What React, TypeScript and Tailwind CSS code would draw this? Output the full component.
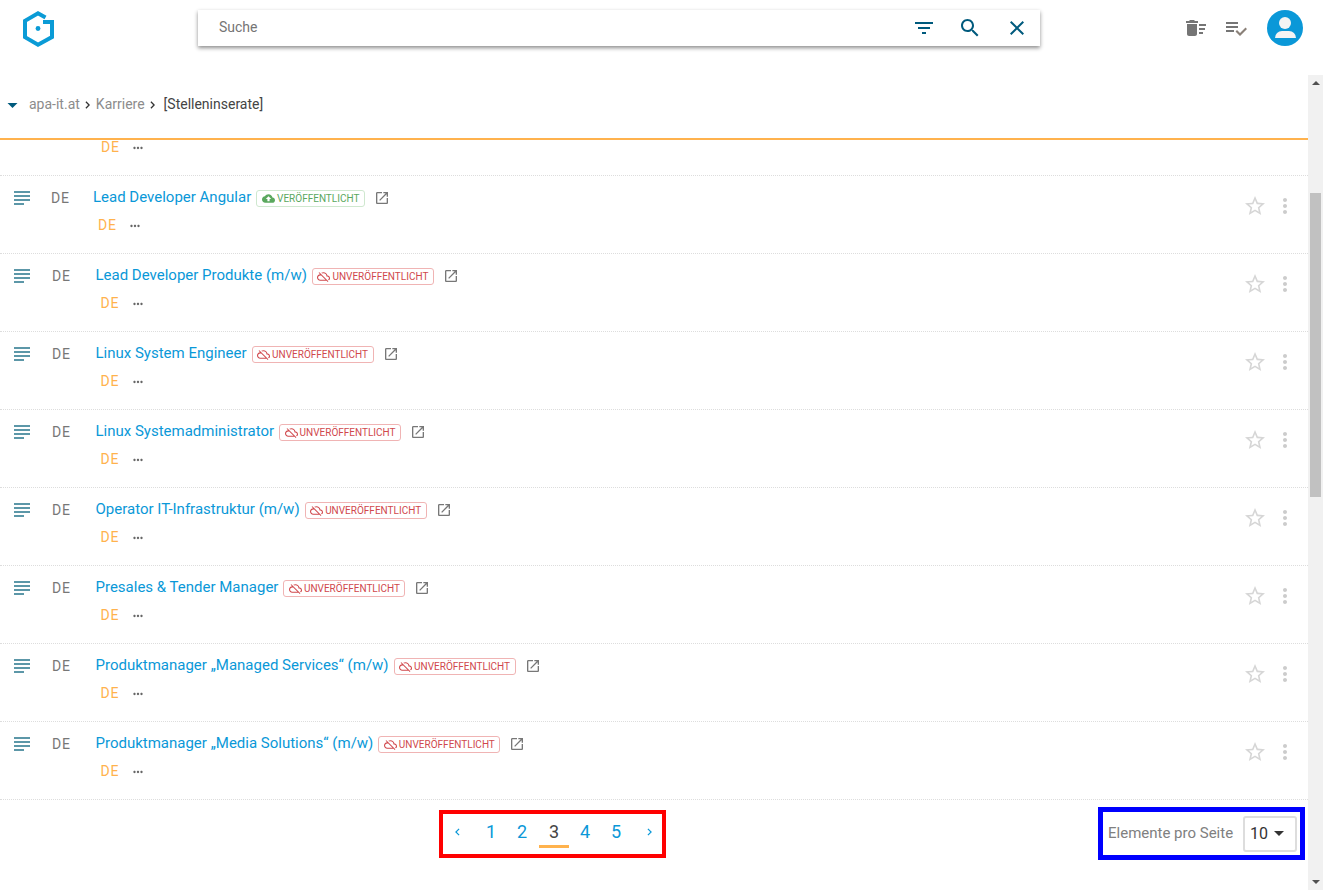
import React from "react";

const P = {
  subject: "M14 17H4v2h10v-2zm6-8H4v2h16V9zM4 15h16v-2H4v2zM4 5v2h16V5H4z",
  filter: "M10 18h4v-2h-4v2zM3 6v2h18V6H3zm3 7h12v-2H6v2z",
  search: "M15.5 14h-.79l-.28-.27C15.41 12.59 16 11.11 16 9.5 16 5.91 13.09 3 9.5 3S3 5.91 3 9.5 5.91 16 9.5 16c1.61 0 3.09-.59 4.23-1.57l.27.28v.79l5 4.99L20.49 19l-4.99-5zm-6 0C7.01 14 5 11.99 5 9.5S7.01 5 9.5 5 14 7.01 14 9.5 11.99 14 9.5 14z",
  close: "M19 6.41L17.59 5 12 10.59 6.41 5 5 6.41 10.59 12 5 17.59 6.41 19 12 13.41 17.59 19 19 17.59 13.41 12z",
  sweep: "M15 16h4v2h-4zm0-8h7v2h-7zm0 4h6v2h-6zM3 18c0 1.1.9 2 2 2h6c1.1 0 2-.9 2-2V8H3v10zM14 5h-3l-1-1H6L5 5H2v2h12z",
  check: "M14 10H2v2h12v-2zm0-4H2v2h12V6zM2 16h8v-2H2v2z",
  checkMark: "M21.5 11.5L23 13l-6.99 7-4.51-4.5L13 14l3.01 3 5.49-5.5z",
  star: "M22 9.24l-7.19-.62L12 2 9.19 8.63 2 9.24l5.46 4.73L5.82 21 12 17.27 18.18 21l-1.63-7.03L22 9.24zM12 15.4l-3.76 2.27 1-4.28-3.32-2.88 4.38-.38L12 6.1l1.71 4.04 4.38.38-3.32 2.88 1 4.28L12 15.4z",
  vert: "M12 8c1.1 0 2-.9 2-2s-.9-2-2-2-2 .9-2 2 .9 2 2 2zm0 2c-1.1 0-2 .9-2 2s.9 2 2 2 2-.9 2-2-.9-2-2-2zm0 6c-1.1 0-2 .9-2 2s.9 2 2 2 2-.9 2-2-.9-2-2-2z",
  horiz: "M6 10c-1.1 0-2 .9-2 2s.9 2 2 2 2-.9 2-2-.9-2-2-2zm12 0c-1.1 0-2 .9-2 2s.9 2 2 2 2-.9 2-2-.9-2-2-2zm-6 0c-1.1 0-2 .9-2 2s.9 2 2 2 2-.9 2-2-.9-2-2-2z",
  open: "M19 19H5V5h7V3H5c-1.11 0-2 .9-2 2v14c0 1.1.89 2 2 2h14c1.1 0 2-.9 2-2v-7h-2v7zM14 3v2h3.59l-9.83 9.83 1.41 1.41L19 6.41V10h2V3h-7z",
  up: "M19.35 10.04C18.67 6.59 15.64 4 12 4 9.11 4 6.6 5.64 5.35 8.04 2.34 8.36 0 10.91 0 14c0 3.31 2.69 6 6 6h13c2.76 0 5-2.24 5-5 0-2.64-2.05-4.78-4.65-4.96zM14 13v4h-4v-4H7l5-5 5 5h-3z",
  off: "M19.35 10.04C18.67 6.59 15.64 4 12 4c-1.48 0-2.85.43-4.01 1.17l1.46 1.46C10.21 6.23 11.08 6 12 6c3.04 0 5.5 2.46 5.5 5.5v.5H19c1.66 0 3 1.34 3 3 0 1.13-.64 2.11-1.56 2.62l1.45 1.45C23.16 18.16 24 16.68 24 15c0-2.64-2.05-4.78-4.65-4.96zM3 5.27l2.75 2.74C2.56 8.15 0 10.77 0 14c0 3.31 2.69 6 6 6h11.73l2 2L21 20.73 4.27 4 3 5.27zM7.73 10l8 8H6c-2.21 0-4-1.79-4-4s1.79-4 4-4h1.73z",
};

function I({ d, className }: { d: string; className: string }) {
  return (
    <svg viewBox="0 0 24 24" fill="currentColor" className={className}>
      <path d={d} />
    </svg>
  );
}

type Row = { title: string; published?: boolean; shift?: boolean };

const rows: Row[] = [
  { title: "Lead Developer Angular", published: true, shift: true },
  { title: "Lead Developer Produkte (m/w)" },
  { title: "Linux System Engineer" },
  { title: "Linux Systemadministrator" },
  { title: "Operator IT-Infrastruktur (m/w)" },
  { title: "Presales & Tender Manager" },
  { title: "Produktmanager „Managed Services“ (m/w)" },
  { title: "Produktmanager „Media Solutions“ (m/w)" },
];

function Sub() {
  return (
    <div className="flex items-center h-[18px]">
      <span className="text-[14px] leading-[18px] tracking-[0.7px] text-[#ffb24d] w-[30px]">DE</span>
      <I d={P.horiz} className="mt-[1px] w-[14px] h-[14px] text-[#666666]" />
    </div>
  );
}

function ListRow({ title, published, shift }: Row) {
  return (
    <div className="h-[78px] shrink-0 flex items-start border-b border-dotted border-[#dddddd]">
      <I d={P.subject} className="w-6 h-6 ml-[10px] mt-[10px] text-[#5c97a8] shrink-0" />
      <span className={`${shift ? "ml-[17px] w-[42px]" : "ml-[18px] w-[43.5px]"} mt-[13px] text-[14px] leading-[18px] tracking-[0.7px] text-[#777777] shrink-0`}>DE</span>
      <div className="flex flex-col">
        <div className="flex items-center h-[22px] mt-[10px]">
          <span className="text-[#0a98d8] text-[15px] leading-[22px] whitespace-nowrap">{title}</span>
          {published ? (
            <span className="ml-[5px] mt-[2px] pt-[1px] h-[17px] w-[109px] flex items-center justify-center gap-[2px] rounded-[3px] border border-[#cfe8cf] text-[#5aa85e] text-[10px] leading-none">
              <I d={P.up} className="w-[13px] h-[13px]" />
              VERÖFFENTLICHT
            </span>
          ) : (
            <span className="ml-[5px] mt-[2px] pt-[1px] h-[17px] w-[122px] flex items-center justify-center gap-[2px] rounded-[3px] border border-[#f0b4b4] text-[#d0484c] text-[10px] leading-none">
              <I d={P.off} className="w-[13px] h-[13px]" />
              UNVERÖFFENTLICHT
            </span>
          )}
          <I d={P.open} className="ml-[9px] mt-[2px] w-4 h-4 text-[#777777]" />
        </div>
        <div className="ml-[5px] mt-[8px]">
          <Sub />
        </div>
      </div>
      <div className="ml-auto flex items-center mt-[18px] mr-[11px]">
        <I d={P.star} className="w-[24px] h-[24px] text-[#d6d6d6]" />
        <I d={P.vert} className="ml-[6px] w-[24px] h-[24px] text-[#cccccc]" />
      </div>
    </div>
  );
}

export default function App() {
  return (
    <div className="h-[890px] w-[1323px] overflow-hidden bg-white flex flex-col font-['Roboto',sans-serif]">
      <header className="h-[75px] shrink-0 flex items-start">
        <svg viewBox="0 0 31 36" className="ml-[23px] mt-[11px] w-[31px] h-[36px] shrink-0" fill="none" stroke="#0a9bd6" strokeWidth="4">
          <path d="M22.500 6.500 15 2.300 2 9.800V26.200L15 33.700 29 26V11H20" />
          <circle cx="15" cy="17.500" r="2.400" fill="#0a9bd6" stroke="none" />
        </svg>
        <div className="ml-[144px] mt-[10px] w-[842px] h-[36px] flex items-center bg-white shadow-[0_2px_4px_rgba(0,0,0,0.45)]">
          <span className="ml-[21px] mb-[2px] text-[14px] text-[#757575]">Suche</span>
          <I d={P.filter} className="ml-auto w-6 h-6 text-[#005a7d]" />
          <I d={P.search} className="ml-[22px] w-6 h-6 text-[#005a7d]" />
          <I d={P.close} className="ml-[23px] mr-[11px] w-6 h-6 text-[#005a7d]" />
        </div>
        <svg viewBox="0 0 24 24" className="ml-[144px] mt-[16px] w-6 h-6 text-[#757575]" fill="currentColor">
          <path d={P.sweep} />
        </svg>
        <svg viewBox="0 0 24 24" className="ml-[16px] mt-[16px] w-6 h-6" fill="#757575">
          <path d={P.check} />
          <path d={P.checkMark} fill="#8a8078" />
        </svg>
        <div className="ml-[19px] mt-[10px] w-[36px] h-[36px] rounded-full bg-[#0a98d8] overflow-hidden flex flex-col items-center">
          <div className="mt-[7px] w-[12px] h-[12px] rounded-full bg-[#f4f4f4]" />
          <div className="mt-[2px] w-[21px] h-[7px] rounded-t-[10px] bg-[#f4f4f4]" />
        </div>
      </header>

      <div className="flex-1 flex min-h-0">
        <div className="w-[1308px] flex flex-col">
          <div className="h-[65px] pb-[4px] shrink-0 flex items-center border-b-2 border-[#ffb24d] text-[14px]">
            <svg viewBox="0 0 12 6" className="ml-[7px] w-[11px] h-[5px] mt-[2px]" fill="#005a7d"><path d="M0 0h12L6 6z" /></svg>
            <span className="ml-[11px] text-[#8c8c8c]">apa-it.at</span>
            <svg viewBox="0 0 6 10" className="ml-[5px] w-[5px] h-[8px]" fill="none" stroke="#333" strokeWidth="1.600"><path d="M1 1l4 4-4 4" /></svg>
            <span className="ml-[6px] text-[#8c8c8c]">Karriere</span>
            <svg viewBox="0 0 6 10" className="ml-[5px] w-[5px] h-[8px]" fill="none" stroke="#333" strokeWidth="1.600"><path d="M1 1l4 4-4 4" /></svg>
            <span className="ml-[9px] text-[#444444]">[Stelleninserate]</span>
          </div>
          <div className="h-[36px] shrink-0 border-b border-dotted border-[#dddddd] pl-[101px]">
            <div className="-mt-[2px]">
              <Sub />
            </div>
          </div>
          {rows.map((r) => (
            <ListRow key={r.title} {...r} />
          ))}
          <footer className="flex items-center h-[67px] shrink-0">
            <div className="ml-[439px] w-[227px] h-[48px] border-[4px] border-[#ff0000] flex items-center text-[18px] text-[#0a98d8]">
              <svg viewBox="0 0 6 10" className="ml-[12px] -mt-[4px] w-[5px] h-[8px]" fill="none" stroke="#0a98d8" strokeWidth="1.500"><path d="M5 1L1 5l4 4" /></svg>
              <span className="ml-[26px] -mt-[4px] w-[10px] text-center">1</span>
              <span className="ml-[21px] -mt-[4px] w-[10px] text-center">2</span>
              <span className="ml-[12px] self-start mt-[4px] w-[30px] h-[30px] text-center text-[#444444] border-b-[3px] border-[#ffb24d] leading-[28px]">3</span>
              <span className="ml-[11px] -mt-[4px] w-[10px] text-center">4</span>
              <span className="ml-[21px] -mt-[4px] w-[10px] text-center">5</span>
              <svg viewBox="0 0 6 10" className="ml-[26px] -mt-[4px] w-[5px] h-[8px]" fill="none" stroke="#0a98d8" strokeWidth="1.500"><path d="M1 1l4 4-4 4" /></svg>
            </div>
            <div className="ml-auto mr-[3px] w-[207px] h-[53px] border-[5px] border-[#0000ff] flex items-center">
              <span className="ml-[5px] text-[15px] text-[#808080] whitespace-nowrap">Elemente pro Seite</span>
              <div className="ml-[10px] w-[54px] h-[36px] flex items-center rounded-[3px] border-2 border-[#dddddd] text-[16px] text-[#333333]">
                <span className="ml-[5px]">10</span>
                <svg viewBox="0 0 10 5" className="ml-[6px] w-[10px] h-[5px]" fill="#333"><path d="M0 0h10L5 5z" /></svg>
              </div>
            </div>
          </footer>
        </div>
        <div className="w-[15px] bg-[#f1f1f1] flex flex-col items-center">
          <svg viewBox="0 0 8 4" className="mt-[6px] w-[8px] h-[4px]" fill="#505050"><path d="M0 4h8L4 0z" /></svg>
          <div className="mt-[108px] w-[11px] h-[304px] bg-[#c1c1c1]" />
          <svg viewBox="0 0 8 4" className="mt-auto mb-[6px] w-[8px] h-[4px]" fill="#505050"><path d="M0 0h8L4 4z" /></svg>
        </div>
      </div>
    </div>
  );
}
